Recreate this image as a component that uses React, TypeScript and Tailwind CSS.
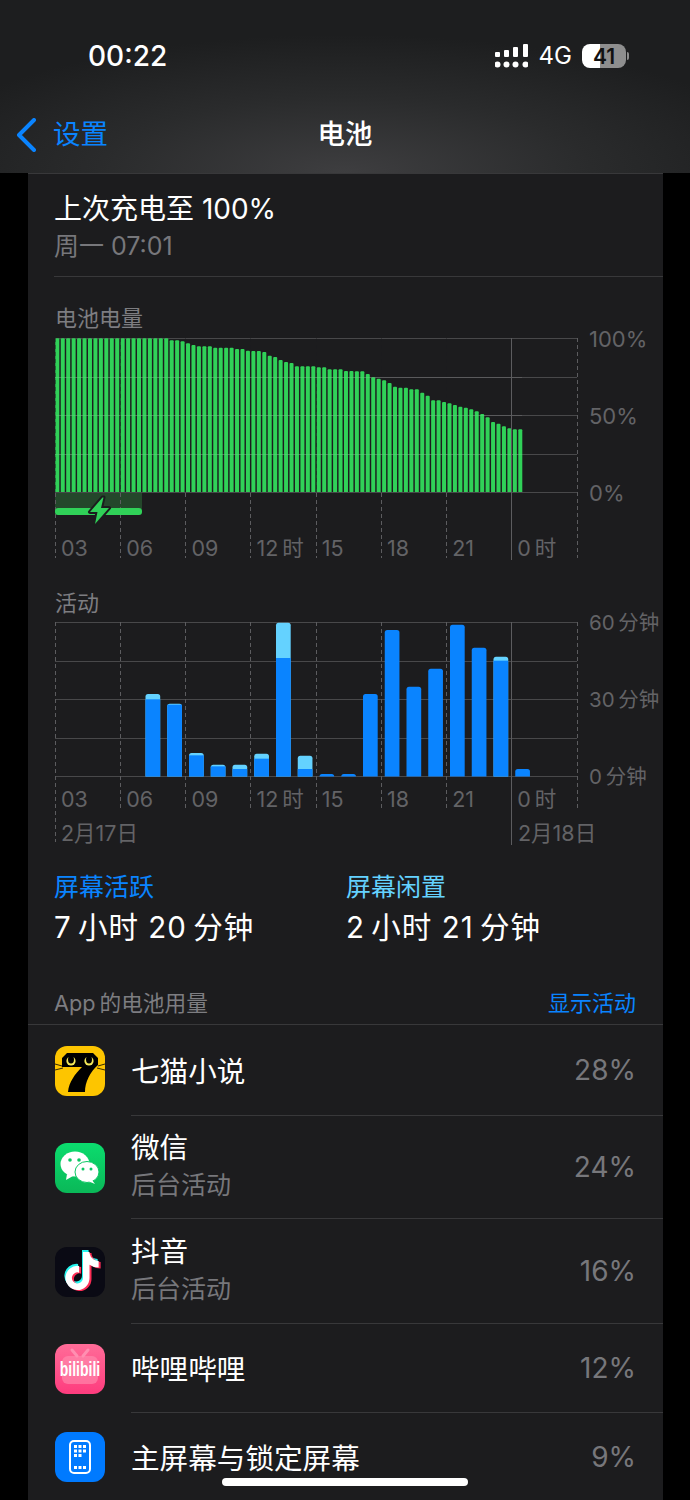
import { FaTiktok } from 'react-icons/fa6'

// bar tops, read off the reference as y offsets from the chart top (px * 3)
const levelTops = [
  ...Array(21).fill(115),
  121, 121, 124, 130, 135, 139, 139, 139, 143, 143, 143, 143, 147, 147, 152, 153, 153, 156, 167, 171, 180, 186, 189,
  199, 199, 199, 199, 202, 202, 208, 208, 208, 213, 213, 214, 214, 222, 232, 236, 241, 249, 260, 263, 263, 268, 268,
  278, 287, 301, 301, 306, 310, 315, 320, 323, 328, 334, 342, 352, 366, 371, 379, 385, 388, 388,
]

const activity: { i: number; top: number; split?: number }[] = [
  { i: 4, top: 313, split: 329 },
  { i: 5, top: 342, split: 345 },
  { i: 6, top: 490, split: 497 },
  { i: 7, top: 525, split: 530 },
  { i: 8, top: 525, split: 538 },
  { i: 9, top: 492, split: 507 },
  { i: 10, top: 99, split: 205 },
  { i: 11, top: 498, split: 538 },
  { i: 12, top: 553 },
  { i: 13, top: 553 },
  { i: 14, top: 313 },
  { i: 15, top: 121 },
  { i: 16, top: 291 },
  { i: 17, top: 237 },
  { i: 18, top: 105 },
  { i: 19, top: 174 },
  { i: 20, top: 201, split: 213 },
  { i: 21, top: 538 },
]

const hours = ['03', '06', '09', '12\u2009时', '15', '18', '21', '0\u2009时']
const dashX = [0.5, 65.5, 130.5, 195.5, 261.5, 326.5, 391.5]

function roundTop(x: number, y: number, w: number, bottom: number, r: number) {
  const rr = Math.min(r, bottom - y)
  return `M${x} ${bottom}V${y + rr}Q${x} ${y} ${x + rr} ${y}H${x + w - rr}Q${x + w} ${y} ${x + w} ${y + rr}V${bottom}Z`
}

function Grid({ dashTo }: { dashTo: number }) {
  return (
    <>
      {[0.5, 39.5, 77.5, 116.5, 154.5].map(y => (
        <line key={y} x1="0" x2="522" y1={y} y2={y} stroke="#48484a" />
      ))}
      <line x1="522.5" x2="522.5" y1="0" y2={dashTo} stroke="#5c5c5f" strokeDasharray="4 3" />
    </>
  )
}

function BatteryChart() {
  return (
    <div className="relative h-[222px] w-[608px]">
      <svg width="524" height="222" className="absolute left-0 top-0">
        <Grid dashTo={220} />
        <rect x="0" y="155" width="87" height="16" fill="#24472b" />
        {levelTops.map((t, i) => {
          const y = (t - 114) / 3
          return <path key={i} d={roundTop(0.3 + i * 5.447, y, 4, 154, 1)} fill="#30d158" />
        })}
        {[39.5, 77.5, 116.5].map(y => (
          <line key={y} x1="0" x2="467" y1={y} y2={y} stroke="#ffffff" strokeOpacity="0.1" />
        ))}
        {dashX.map(x => (
          <line key={x} x1={x} x2={x} y1="0" y2="154" stroke="#1c1c1e" strokeOpacity="0.4" strokeDasharray="4 3" />
        ))}
        {dashX.map(x => (
          <line key={x} x1={x} x2={x} y1="155" y2="220" stroke="#5c5c5f" strokeDasharray="4 3" />
        ))}
        <line x1="456.5" x2="456.5" y1="0" y2="222" stroke="#5c5c5f" />
        <rect x="0" y="170" width="87" height="7" rx="3" fill="#30d158" />
        <path
          d="M47.5 159.5L35 174H42.5L40 186L54 170H46L48.5 159.5Z"
          fill="#30d158"
          stroke="#1c1c1e"
          strokeWidth="4"
          strokeLinejoin="round"
          paintOrder="stroke"
        />
      </svg>
      <HourLabels top="top-[200px]" />
      <AxisLabels labels={['100%', '50%', '0%']} size="text-[22px]" />
    </div>
  )
}

function ActivityChart() {
  return (
    <div className="relative h-[224px] w-[608px]">
      <svg width="524" height="224" className="absolute left-0 top-0">
        <Grid dashTo={186} />
        {activity.map(b => {
          const x = 3.5 + b.i * 21.75
          const y = (b.top - 97) / 3
          const split = b.split ? (b.split - 97) / 3 : undefined
          return (
            <g key={b.i}>
              <path d={roundTop(x, y, 14.7, 154.5, 2.5)} fill={split ? '#64d2ff' : '#0a84ff'} />
              {split && <rect x={x} y={split} width="14.7" height={154.5 - split} fill="#0a84ff" />}
            </g>
          )
        })}
        {dashX.map((x, i) => (
          <line key={x} x1={x} x2={x} y1="0" y2={i === 0 ? 220 : 186} stroke="#5c5c5f" strokeDasharray="4 3" />
        ))}
        <line x1="456.5" x2="456.5" y1="0" y2="223" stroke="#5c5c5f" />
      </svg>
      <HourLabels top="top-[167px]" />
      <div className="absolute left-[6px] top-[201px] text-[21.5px] leading-[20px] text-[#636366]">2月17日</div>
      <div className="absolute left-[463px] top-[201px] text-[21.5px] leading-[20px] text-[#636366]">2月18日</div>
      <AxisLabels labels={['60\u2009分钟', '30\u2009分钟', '0\u2009分钟']} size="text-[20.5px]" />
    </div>
  )
}

function HourLabels({ top }: { top: string }) {
  return (
    <div className={`absolute left-0 flex w-[522px] ${top}`}>
      {hours.map(h => (
        <span key={h} className="w-[65.2px] pl-[6px] text-[21.5px] leading-[20px] text-[#636366]">
          {h}
        </span>
      ))}
    </div>
  )
}

function AxisLabels({ labels, size }: { labels: string[]; size: string }) {
  return (
    <div className={`absolute left-[534px] top-[-11px] flex h-[178px] flex-col justify-between leading-[24px] text-[#636366] ${size}`}>
      {labels.map(l => (
        <span key={l} className="whitespace-nowrap">
          {l}
        </span>
      ))}
    </div>
  )
}

function QimaoIcon() {
  return (
    <svg viewBox="0 0 50 50" className="h-[50px] w-[50px] rounded-[12px]">
      <rect width="50" height="50" fill="#fdc500" />
      <path d="M7 7H43V19C35 26 30 36 30 46H13C14 36 20 28 27 21H7Z" fill="#000" />
      <path d="M7 7L12 7L7 12ZM43 7L38 7L43 12Z" fill="#fdc500" />
      <circle cx="16" cy="15" r="4.6" fill="#f5ea5a" />
      <circle cx="34" cy="15" r="4.6" fill="#f5ea5a" />
      <ellipse cx="16" cy="13.5" rx="3" ry="4" fill="#000" />
      <ellipse cx="34" cy="13.5" rx="3" ry="4" fill="#000" />
      <path d="M0 18L7 20M0 24L8 22M50 18L43 20M50 24L42 22" stroke="#000" strokeWidth="0.8" />
    </svg>
  )
}

function WechatIcon() {
  return (
    <svg viewBox="0 0 50 50" className="h-[50px] w-[50px] rounded-[12px]">
      <defs>
        <linearGradient id="wx" x1="0" y1="0" x2="0" y2="1">
          <stop offset="0" stopColor="#0bdc6e" />
          <stop offset="1" stopColor="#0ab858" />
        </linearGradient>
      </defs>
      <rect width="50" height="50" fill="url(#wx)" />
      <ellipse cx="20" cy="21" rx="14.5" ry="12.5" fill="#fff" />
      <path d="M12 31L11 37L18 33Z" fill="#fff" />
      <circle cx="15" cy="17" r="1.8" fill="#0bc864" />
      <circle cx="24" cy="17" r="1.8" fill="#0bc864" />
      <ellipse cx="32" cy="29" rx="12" ry="10.5" fill="#fff" stroke="#0bc864" strokeWidth="1" />
      <path d="M37 37L40 41L34 38.5Z" fill="#fff" />
      <circle cx="28" cy="26" r="1.5" fill="#0bc864" />
      <circle cx="36" cy="26" r="1.5" fill="#0bc864" />
    </svg>
  )
}

function TiktokIcon() {
  return (
    <div className="relative flex h-[50px] w-[50px] items-center justify-center rounded-[12px] bg-[#0a0a14]">
      <FaTiktok className="absolute left-[6.5px] top-[3.5px] text-[38px] text-[#25f4ee]" />
      <FaTiktok className="absolute left-[9.5px] top-[6.5px] text-[38px] text-[#fe2c55]" />
      <FaTiktok className="absolute left-[8px] top-[5px] text-[38px] text-white" />
    </div>
  )
}

function BiliIcon() {
  return (
    <svg viewBox="0 0 50 50" className="h-[50px] w-[50px] rounded-[12px]">
      <defs>
        <linearGradient id="bl" x1="0" y1="0" x2="0" y2="1">
          <stop offset="0" stopColor="#ff6c98" />
          <stop offset="1" stopColor="#fe3c7e" />
        </linearGradient>
      </defs>
      <rect width="50" height="50" fill="url(#bl)" />
      <path d="M17 6L22 12M33 6L28 12" stroke="#ff8fb1" strokeWidth="3" strokeLinecap="round" />
      <rect x="7" y="12" width="36" height="28" rx="6" fill="#ff8fb1" fillOpacity="0.6" />
      <text
        transform="translate(25 32) scale(1 1.45)"
        textAnchor="middle"
        fontFamily="Liberation Sans"
        fontWeight="700"
        fontSize="14"
        fill="#fff"
      >
        bilibili
      </text>
    </svg>
  )
}

function HomeIcon() {
  return (
    <svg viewBox="0 0 50 50" className="h-[50px] w-[50px] rounded-[12px]">
      <rect width="50" height="50" fill="#007aff" />
      <rect x="15" y="9" width="20" height="32" rx="4" fill="none" stroke="#fff" strokeWidth="2" />
      {[
        [19, 13], [23.5, 13], [28, 13],
        [19, 17.5], [23.5, 17.5], [28, 17.5],
        [19, 22], [23.5, 22],
        [19, 34], [23.5, 34], [28, 34],
      ].map(([x, y]) => (
        <rect key={`${x}-${y}`} x={x} y={y} width="3" height="3" fill="#fff" />
      ))}
    </svg>
  )
}

const apps = [
  { name: '七猫小说', pct: '28%', icon: <QimaoIcon />, h: 'h-[91px]' },
  { name: '微信', sub: '后台活动', pct: '24%', icon: <WechatIcon />, h: 'h-[103px]' },
  { name: '抖音', sub: '后台活动', pct: '16%', icon: <TiktokIcon />, h: 'h-[105px]' },
  { name: '哔哩哔哩', pct: '12%', icon: <BiliIcon />, h: 'h-[89px]' },
  { name: '主屏幕与锁定屏幕', pct: '9%', icon: <HomeIcon />, h: 'h-[88px]' },
]

export default function App() {
  return (
    <div className="relative h-[1500px] w-[690px] overflow-hidden bg-black font-['Inter','Noto_Sans_CJK_SC',sans-serif] text-white">
      {/* Header */}
      <div className="h-[173px] bg-[radial-gradient(ellipse_65%_80%_at_50%_100%,#3e3e40_0%,#2a2b2c_55%,#1d1e1f_100%)]">
        <div className="flex h-[112px] items-center pl-[88px] pr-[61px]">
          <span className="text-[28px] font-medium">00:22</span>
          <div className="ml-auto flex items-center">
            <svg width="33" height="24" viewBox="0 0 33 24" fill="#fff">
              <rect x="0" y="8" width="5" height="5" rx="1" />
              <rect x="9" y="6" width="5" height="7" rx="1" />
              <rect x="18" y="3" width="5" height="10" rx="1" />
              <rect x="28" y="0" width="5" height="13" rx="1" />
              <circle cx="2.5" cy="20.5" r="3" />
              <circle cx="11.5" cy="20.5" r="3" />
              <circle cx="20.5" cy="20.5" r="3" />
              <circle cx="30.5" cy="20.5" r="3" />
            </svg>
            <span className="ml-[11px] text-[24px]">4G</span>
            <div className="ml-[10px] flex h-[24px] w-[44px] items-center justify-center rounded-[8px] bg-[linear-gradient(90deg,#ffffff_41%,#8e8e8e_41%)] text-[21px] font-semibold leading-none text-[#111]">
              41
            </div>
            <div className="ml-px h-[8px] w-[2px] rounded-r-full bg-[#8e8e8e]" />
          </div>
        </div>
        <div className="grid h-[46px] grid-cols-[1fr_auto_1fr] items-center">
          <div className="flex items-center pl-[16px] text-[#0a84ff]">
            <svg width="20" height="34" viewBox="0 0 20 34" fill="none">
              <path d="M18 2L3 17L18 32" stroke="#0a84ff" strokeWidth="4" strokeLinecap="round" strokeLinejoin="round" />
            </svg>
            <span className="ml-[17px] text-[27.5px] leading-none">设置</span>
          </div>
          <span className="text-[27.5px] font-medium leading-none">电池</span>
          <div />
        </div>
      </div>

      {/* Card */}
      <div className="ml-[28px] h-[1327px] w-[635px] border-t border-[#38383a] bg-[#1c1c1e]">
        <div className="pl-[26px]">
          <div className="pt-[17px] text-[28px] leading-[36px]">上次充电至 100%</div>
          <div className="mt-[3px] text-[25px] leading-[32px] text-[#77777b]">周一 07:01</div>
          <div className="mt-[14px] h-px bg-[#38383a]" />
          <div className="mt-[28px] pl-[1px] text-[22px] leading-[26px] text-[#7d7d81]">电池电量</div>
          <div className="ml-[1px] mt-[7px]">
            <BatteryChart />
          </div>
          <div className="mt-[30px] pl-[1px] text-[22px] leading-[26px] text-[#7d7d81]">活动</div>
          <div className="ml-[1px] mt-[6px]">
            <ActivityChart />
          </div>
          <div className="mt-[25px] grid grid-cols-[292px_1fr]">
            <div>
              <div className="text-[25px] leading-[32px] text-[#0a84ff]">屏幕活跃</div>
              <div className="mt-[4px] text-[29.5px] leading-[40px] tracking-[1px]">7{'\u2009'}小时 20{'\u2009'}分钟</div>
            </div>
            <div>
              <div className="text-[25px] leading-[32px] text-[#64d2ff]">屏幕闲置</div>
              <div className="mt-[4px] text-[29.5px] leading-[40px] tracking-[1px]">2{'\u2009'}小时 21{'\u2009'}分钟</div>
            </div>
          </div>
          <div className="mt-[42px] flex items-center justify-between pr-[27px] leading-[28px]">
            <span className="text-[21.7px] text-[#7d7d81]">App{'\u2009'}的电池用量</span>
            <span className="text-[22px] text-[#0a84ff]">显示活动</span>
          </div>
        </div>
        <div className="mt-[7px] h-px bg-[#38383a]" />
        {apps.map((app, i) => (
          <div key={app.name} className={`flex items-center pl-[27px] ${app.h}`}>
            <div className="shrink-0">{app.icon}</div>
            <div
              className={`ml-[26px] flex h-full flex-1 items-center pr-[27px] ${
                i < apps.length - 1 ? 'border-b border-[#38383a]' : ''
              }`}
            >
              <div className={app.sub ? '-mt-[3px]' : 'mt-[3px]'}>
                <div className="text-[28.6px] leading-[36px]">{app.name}</div>
                {app.sub && <div className="mt-[3px] text-[25px] leading-[32px] text-[#77777b]">{app.sub}</div>}
              </div>
              <span className="ml-auto text-[28px] text-[#77777b]">{app.pct}</span>
            </div>
          </div>
        ))}
      </div>

      {/* Home indicator */}
      <div className="absolute bottom-[14px] left-[222px] h-[8px] w-[246px] rounded-full bg-white" />
    </div>
  )
}
